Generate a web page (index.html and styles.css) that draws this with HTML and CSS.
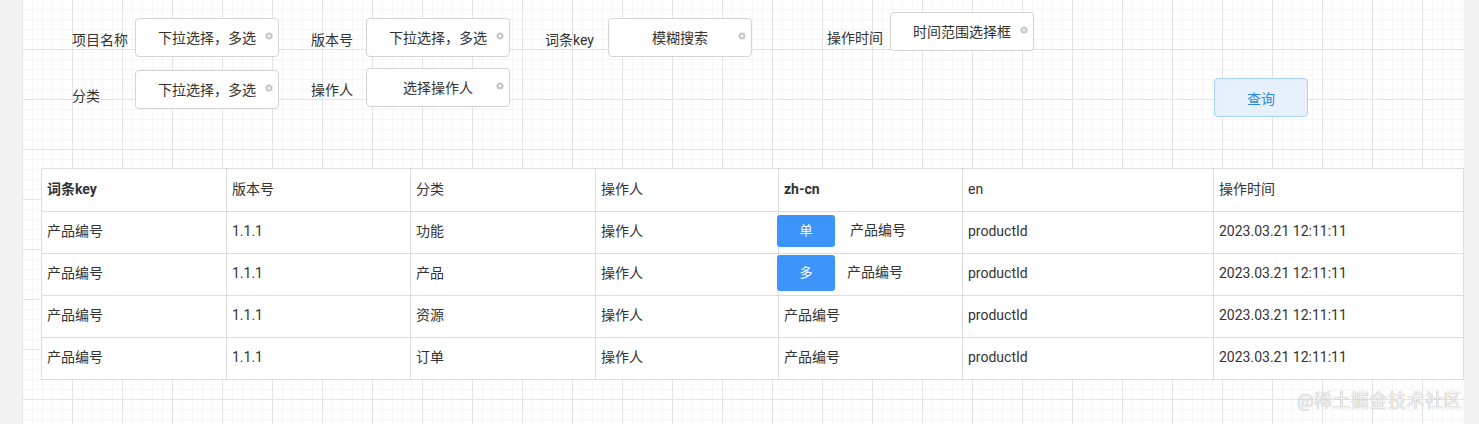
FILE: index.html
```html
<!DOCTYPE html>
<html lang="zh-CN">
<head>
  <meta charset="UTF-8" />
  <meta name="viewport" content="width=device-width, initial-scale=1.0" />
  <title>词条管理</title>
  <link rel="stylesheet" href="styles.css">
</head>
<body>
  <div class="canvas">
    <form class="filters">
      <div class="filters-row">
        <div class="field">
          <label class="field-label label-w4">项目名称</label>
          <div class="select">下拉选择，多选<span class="clear"><svg viewBox="0 0 8 8"><circle cx="4" cy="4" r="3.6"/><path d="M2.6 2.6l2.8 2.8M5.4 2.6l-2.8 2.8"/></svg></span></div>
        </div>
        <div class="field field--space-sm">
          <label class="field-label label-w3">版本号</label>
          <div class="select">下拉选择，多选<span class="clear"><svg viewBox="0 0 8 8"><circle cx="4" cy="4" r="3.6"/><path d="M2.6 2.6l2.8 2.8M5.4 2.6l-2.8 2.8"/></svg></span></div>
        </div>
        <div class="field field--space-lg">
          <label class="field-label label-w4">词条key</label>
          <div class="select">模糊搜索<span class="clear"><svg viewBox="0 0 8 8"><circle cx="4" cy="4" r="3.6"/><path d="M2.6 2.6l2.8 2.8M5.4 2.6l-2.8 2.8"/></svg></span></div>
        </div>
        <div class="field field--raised">
          <label class="field-label label-w4 field-label--low">操作时间</label>
          <div class="select">时间范围选择框<span class="clear"><svg viewBox="0 0 8 8"><circle cx="4" cy="4" r="3.6"/><path d="M2.6 2.6l2.8 2.8M5.4 2.6l-2.8 2.8"/></svg></span></div>
        </div>
      </div>
      <div class="filters-row filters-row--second">
        <div class="field field--drop">
          <label class="field-label label-w4 field-label--low">分类</label>
          <div class="select">下拉选择，多选<span class="clear"><svg viewBox="0 0 8 8"><circle cx="4" cy="4" r="3.6"/><path d="M2.6 2.6l2.8 2.8M5.4 2.6l-2.8 2.8"/></svg></span></div>
        </div>
        <div class="field">
          <label class="field-label label-w3">操作人</label>
          <div class="select">选择操作人<span class="clear"><svg viewBox="0 0 8 8"><circle cx="4" cy="4" r="3.6"/><path d="M2.6 2.6l2.8 2.8M5.4 2.6l-2.8 2.8"/></svg></span></div>
        </div>
        <button type="button" class="btn-query">查询</button>
      </div>
    </form>

    <table class="entries">
      <colgroup>
        <col class="col-key"><col class="col-ver"><col class="col-cat"><col class="col-user">
        <col class="col-zh"><col class="col-en"><col class="col-time">
      </colgroup>
      <thead>
        <tr>
          <th class="strong">词条key</th>
          <th>版本号</th>
          <th>分类</th>
          <th>操作人</th>
          <th class="strong">zh-cn</th>
          <th>en</th>
          <th>操作时间</th>
        </tr>
      </thead>
      <tbody>
        <tr>
          <td>产品编号</td>
          <td>1.1.1</td>
          <td>功能</td>
          <td>操作人</td>
          <td class="zh-cell"><span class="tag">单</span>产品编号</td>
          <td>productId</td>
          <td>2023.03.21 12:11:11</td>
        </tr>
        <tr>
          <td>产品编号</td>
          <td>1.1.1</td>
          <td>产品</td>
          <td>操作人</td>
          <td class="zh-cell"><span class="tag tag--tall">多</span>产品编号</td>
          <td>productId</td>
          <td>2023.03.21 12:11:11</td>
        </tr>
        <tr>
          <td>产品编号</td>
          <td>1.1.1</td>
          <td>资源</td>
          <td>操作人</td>
          <td>产品编号</td>
          <td>productId</td>
          <td>2023.03.21 12:11:11</td>
        </tr>
        <tr>
          <td>产品编号</td>
          <td>1.1.1</td>
          <td>订单</td>
          <td>操作人</td>
          <td>产品编号</td>
          <td>productId</td>
          <td>2023.03.21 12:11:11</td>
        </tr>
      </tbody>
    </table>

    <div class="watermark">@稀土掘金技术社区</div>
  </div>
</body>
</html>
```

FILE: styles.css
```css
/* Reset */
*, *::before, *::after {
  margin: 0;
  padding: 0;
  box-sizing: border-box;
}
body {
  font-family: Roboto, "Noto Sans CJK SC", sans-serif;
  font-size: 14px;
  color: #333;
  background: #f2f2f2;
  overflow: hidden;
}

/* Designer canvas with grid */
.canvas {
  position: relative;
  margin-left: 22px;
  width: 1442px;
  min-height: 100vh;
  background-color: #fff;
  background-image:
    linear-gradient(to right, #e3e3e3 1px, transparent 1px),
    linear-gradient(to bottom, #e3e3e3 1px, transparent 1px),
    linear-gradient(to right, #f6f6f6 1px, transparent 1px),
    linear-gradient(to bottom, #f6f6f6 1px, transparent 1px);
  background-size: 50px 50px, 50px 50px, 10px 10px, 10px 10px;
  background-position: 0 -1px, 0 -1px, 0 -1px, 0 -1px;
  overflow: hidden;
}

/* Filters */
.filters {
  padding: 18px 156px 0 50px;
}
.filters-row {
  display: flex;
  align-items: flex-start;
  gap: 32px;
}
.filters-row--second {
  margin-top: 11px;
}
.field {
  display: flex;
  align-items: center;
}
.field--space-sm { margin-right: 3px; }
.field--space-lg { margin-right: 43px; }
.field--raised { margin-top: -6px; }
.field--drop { margin-top: 2px; }
.field-label {
  padding-top: 5px;
  line-height: 20px;
  white-space: nowrap;
}
.field-label--low { padding-top: 12px; }
.label-w4 { width: 63px; }
.label-w3 { width: 55px; }

.select {
  position: relative;
  width: 144px;
  height: 39px;
  line-height: 38px;
  text-align: center;
  background: #fff;
  border: 1px solid #d4d4d4;
  border-radius: 4px;
}
.clear {
  position: absolute;
  right: 5px;
  top: 13px;
  width: 8px;
  height: 8px;
  line-height: 0;
}
.clear svg {
  width: 8px;
  height: 8px;
}
.clear circle { fill: #c6c8cc; }
.clear path { stroke: #fff; stroke-width: 1; }

.btn-query {
  margin-left: auto;
  margin-top: 10px;
  width: 94px;
  height: 39px;
  font: inherit;
  color: #2b88e3;
  background: #e6f1fd;
  border: 1px solid #a9d1f6;
  border-radius: 4px;
}

/* Table */
.entries {
  margin: 51px 0 0 19px;
  width: 1422px;
  table-layout: fixed;
  border-collapse: collapse;
  background: #fff;
}
.col-key { width: 185px; }
.col-ver { width: 184px; }
.col-cat { width: 185px; }
.col-user { width: 183px; }
.col-zh { width: 184px; }
.col-en { width: 251px; }
.col-time { width: 250px; }

.entries th,
.entries td {
  border: 1px solid #dcdcdc;
  padding: 0 5px 3px;
  line-height: 20px;
  text-align: left;
  vertical-align: middle;
  font-weight: normal;
  white-space: nowrap;
}
.entries th { height: 43px; }
.entries td { height: 42px; }
.entries th.strong { font-weight: bold; }

.entries .zh-cell {
  padding-left: 0;
}
.tag {
  display: inline-flex;
  align-items: center;
  justify-content: center;
  width: 58px;
  height: 32px;
  margin: 0 15px 0 -2px;
  vertical-align: middle;
  color: #fff;
  font-size: 13px;
  background: #3d95fb;
  border-radius: 3px;
}
.tag--tall {
  height: 36px;
  margin-right: 12px;
}

/* Watermark overlay */
.watermark {
  position: absolute;
  right: 2px;
  bottom: 12px;
  font-size: 18px;
  color: #f2f2f2;
  text-shadow: 0 0 1px rgba(0, 0, 0, 0.45);
  letter-spacing: 0.5px;
}
```
